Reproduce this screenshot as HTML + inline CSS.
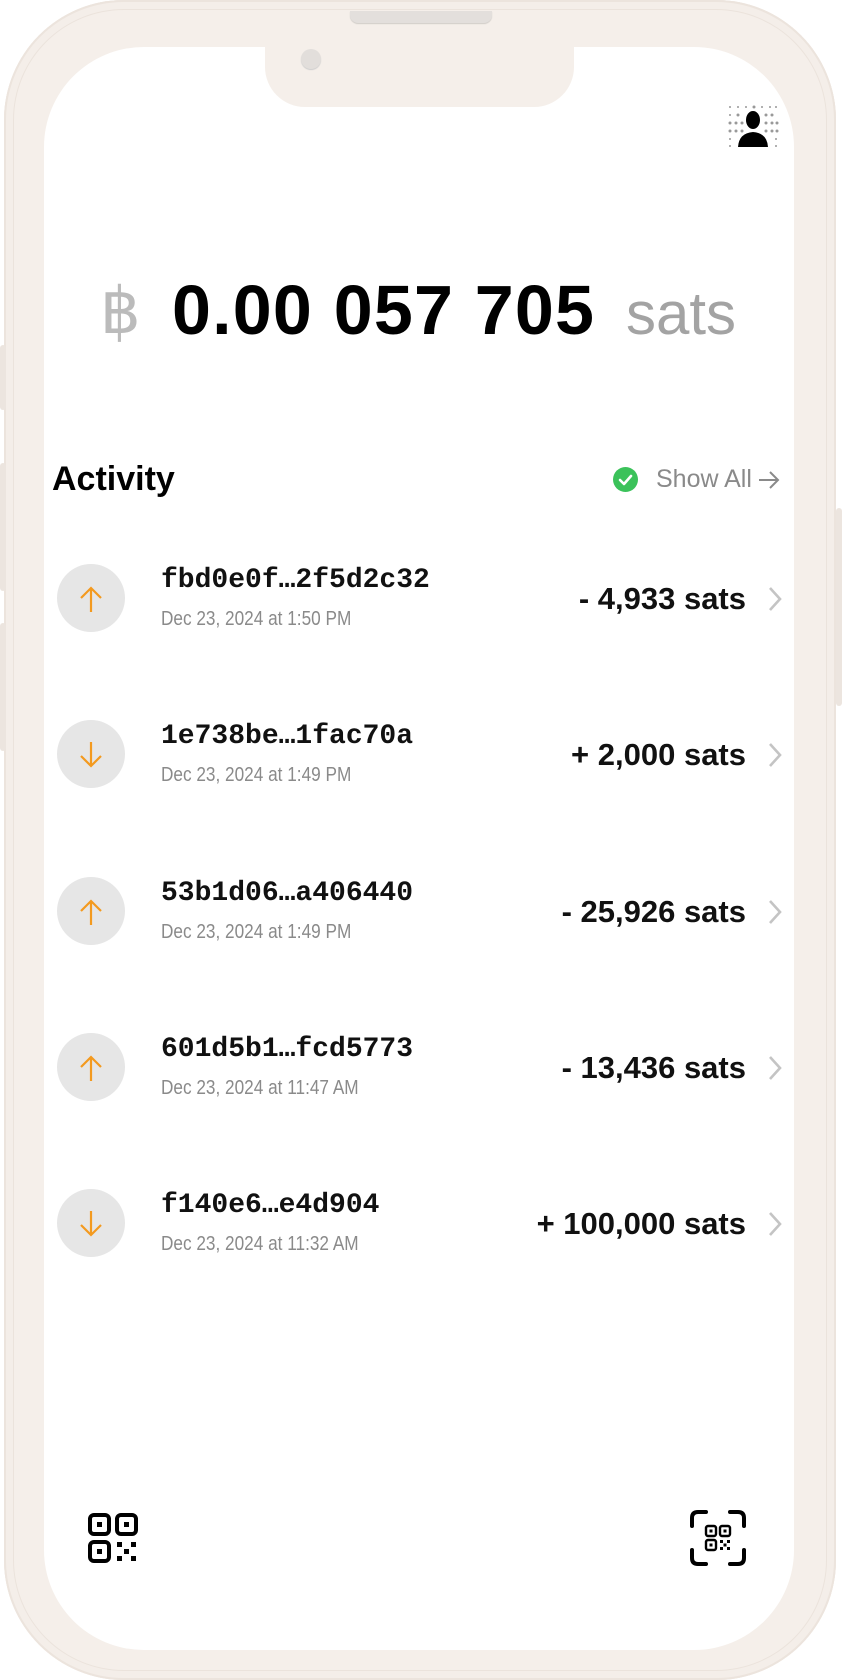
<!DOCTYPE html>
<html><head><meta charset="utf-8"><style>
*{margin:0;padding:0;box-sizing:border-box}
html,body{width:842px;height:1680px;background:#fff;overflow:hidden;font-family:"Liberation Sans",sans-serif}
.abs{position:absolute}
.phone{left:4px;top:0;width:832px;height:1680px;border-radius:120px;background:#f5efea;box-shadow:inset 0 0 0 2px #ece4dd, inset 0 0 0 9px #f4eee9, inset 0 0 0 10px #ebe3dc}
.screen{left:44px;top:47px;width:750px;height:1603px;border-radius:100px;background:#fff}
.notch{left:265px;top:40px;width:309px;height:67px;background:#f5efea;border-radius:0 0 40px 40px}
.spk{left:350px;top:11px;width:142px;height:12px;background:#e3dfdc;border-radius:0 0 8px 8px;box-shadow:0 1px 1px #d0ccc8}
.cam{left:301px;top:49px;width:20px;height:20px;border-radius:50%;background:#e2dedb;box-shadow:0 1px 1px #ccc}
.side{background:#ece5df;width:6px;border-radius:3px}
.mono{font-family:"Liberation Mono",monospace;font-weight:bold;font-size:28px;color:#111;line-height:34px}
.date{font-size:20px;color:#8a8a8a;transform:scaleX(0.86);transform-origin:0 0;white-space:nowrap}
.amt{font-weight:bold;font-size:31px;color:#111;right:96px;text-align:right;white-space:nowrap;line-height:34px}
.circ{left:57px;width:68px;height:68px;border-radius:50%;background:#e6e6e6}
</style></head><body>
<div class="abs phone"></div>
<div class="abs side" style="left:0;top:345px;height:65px"></div>
<div class="abs side" style="left:0;top:463px;height:128px"></div>
<div class="abs side" style="left:0;top:623px;height:128px"></div>
<div class="abs side" style="left:836px;top:508px;height:198px"></div>
<div class="abs screen"></div>
<div class="abs notch"></div>
<div class="abs spk"></div>
<div class="abs cam"></div>

<svg class="abs" style="left:727px;top:104px" width="52" height="44" viewBox="0 0 52 44">
<g fill="#999">
<circle cx="3" cy="3" r="1"/><circle cx="11" cy="3" r="1"/><circle cx="19" cy="3" r="1"/><circle cx="27" cy="3" r="1.5"/><circle cx="35" cy="3" r="1"/><circle cx="43" cy="3" r="1"/><circle cx="49" cy="3" r="1"/>
<circle cx="3" cy="11" r="1"/><circle cx="11" cy="11" r="1.5"/><circle cx="39" cy="11" r="1.5"/><circle cx="45" cy="11" r="1.5"/>
<circle cx="3" cy="19" r="1.5"/><circle cx="9" cy="19" r="1.5"/><circle cx="15" cy="19" r="1.5"/><circle cx="39" cy="19" r="1.5"/><circle cx="45" cy="19" r="1.5"/><circle cx="50" cy="19" r="1.5"/>
<circle cx="3" cy="27" r="1.5"/><circle cx="9" cy="27" r="1.5"/><circle cx="15" cy="27" r="1.5"/><circle cx="39" cy="27" r="1.5"/><circle cx="45" cy="27" r="1.5"/><circle cx="50" cy="27" r="1.5"/>
<circle cx="3" cy="35" r="1"/><circle cx="49" cy="35" r="1"/><circle cx="3" cy="42" r="1"/><circle cx="49" cy="42" r="1"/>
</g>
<ellipse cx="26" cy="16" rx="7" ry="9" fill="#000"/>
<path d="M11 43 Q12 29 26 28 Q40 29 41 43 Z" fill="#000"/>
</svg>

<div class="abs" style="left:100px;top:276px;font-size:64px;color:#bbb;font-weight:300;line-height:70px">฿</div>
<div class="abs" style="left:172px;top:270px;font-size:70px;font-weight:bold;color:#000;line-height:80px;letter-spacing:1.2px">0.00 057 705</div>
<div class="abs" style="left:626px;top:274px;font-size:60px;color:#9a9a9a;line-height:80px;opacity:0.9">sats</div>

<div class="abs" style="left:52px;top:459px;font-size:34px;font-weight:bold;color:#000;line-height:40px">Activity</div>
<svg class="abs" style="left:613px;top:467px" width="25" height="25" viewBox="0 0 25 25"><circle cx="12.5" cy="12.5" r="12.5" fill="#3bc25a"/><path d="M7 13 L11 17 L18 9" stroke="#fff" stroke-width="2.6" fill="none" stroke-linecap="round" stroke-linejoin="round"/></svg>
<div class="abs" style="left:656px;top:464px;font-size:25px;color:#8a8a8a;line-height:30px">Show All</div>
<svg class="abs" style="left:757px;top:469px" width="24" height="22" viewBox="0 0 24 22"><path d="M2 11 H21 M13 3 L21 11 L13 19" stroke="#8a8a8a" stroke-width="2" fill="none"/></svg>

<div class="abs circ" style="top:564px"></div>
<svg class="abs" style="left:78px;top:585px" width="26" height="28" viewBox="0 0 26 28"><path d="M13 27 V3 M3 13 L13 3 L23 13" stroke="#f39a1f" stroke-width="2.2" fill="none"/></svg>
<div class="abs mono" style="left:161px;top:564px">fbd0e0f…2f5d2c32</div>
<div class="abs date" style="left:161px;top:608px">Dec 23, 2024 at 1:50 PM</div>
<div class="abs amt" style="top:582px">- 4,933 sats</div>
<svg class="abs" style="left:767px;top:586px" width="16" height="26" viewBox="0 0 16 26"><path d="M3 2 L13 13 L3 24" stroke="#c4c4c4" stroke-width="2.6" fill="none"/></svg>

<div class="abs circ" style="top:720px"></div>
<svg class="abs" style="left:78px;top:741px" width="26" height="28" viewBox="0 0 26 28"><path d="M13 1 V25 M3 15 L13 25 L23 15" stroke="#f39a1f" stroke-width="2.2" fill="none"/></svg>
<div class="abs mono" style="left:161px;top:720px">1e738be…1fac70a</div>
<div class="abs date" style="left:161px;top:764px">Dec 23, 2024 at 1:49 PM</div>
<div class="abs amt" style="top:738px">+ 2,000 sats</div>
<svg class="abs" style="left:767px;top:742px" width="16" height="26" viewBox="0 0 16 26"><path d="M3 2 L13 13 L3 24" stroke="#c4c4c4" stroke-width="2.6" fill="none"/></svg>

<div class="abs circ" style="top:877px"></div>
<svg class="abs" style="left:78px;top:898px" width="26" height="28" viewBox="0 0 26 28"><path d="M13 27 V3 M3 13 L13 3 L23 13" stroke="#f39a1f" stroke-width="2.2" fill="none"/></svg>
<div class="abs mono" style="left:161px;top:877px">53b1d06…a406440</div>
<div class="abs date" style="left:161px;top:921px">Dec 23, 2024 at 1:49 PM</div>
<div class="abs amt" style="top:895px">- 25,926 sats</div>
<svg class="abs" style="left:767px;top:899px" width="16" height="26" viewBox="0 0 16 26"><path d="M3 2 L13 13 L3 24" stroke="#c4c4c4" stroke-width="2.6" fill="none"/></svg>

<div class="abs circ" style="top:1033px"></div>
<svg class="abs" style="left:78px;top:1054px" width="26" height="28" viewBox="0 0 26 28"><path d="M13 27 V3 M3 13 L13 3 L23 13" stroke="#f39a1f" stroke-width="2.2" fill="none"/></svg>
<div class="abs mono" style="left:161px;top:1033px">601d5b1…fcd5773</div>
<div class="abs date" style="left:161px;top:1077px">Dec 23, 2024 at 11:47 AM</div>
<div class="abs amt" style="top:1051px">- 13,436 sats</div>
<svg class="abs" style="left:767px;top:1055px" width="16" height="26" viewBox="0 0 16 26"><path d="M3 2 L13 13 L3 24" stroke="#c4c4c4" stroke-width="2.6" fill="none"/></svg>

<div class="abs circ" style="top:1189px"></div>
<svg class="abs" style="left:78px;top:1210px" width="26" height="28" viewBox="0 0 26 28"><path d="M13 1 V25 M3 15 L13 25 L23 15" stroke="#f39a1f" stroke-width="2.2" fill="none"/></svg>
<div class="abs mono" style="left:161px;top:1189px">f140e6…e4d904</div>
<div class="abs date" style="left:161px;top:1233px">Dec 23, 2024 at 11:32 AM</div>
<div class="abs amt" style="top:1207px">+ 100,000 sats</div>
<svg class="abs" style="left:767px;top:1211px" width="16" height="26" viewBox="0 0 16 26"><path d="M3 2 L13 13 L3 24" stroke="#c4c4c4" stroke-width="2.6" fill="none"/></svg>

<svg class="abs" style="left:88px;top:1513px" width="52" height="52" viewBox="0 0 52 52">
<g fill="none" stroke="#000" stroke-width="4"><rect x="2" y="2" width="19" height="19" rx="4"/><rect x="29" y="2" width="19" height="19" rx="4"/><rect x="2" y="29" width="19" height="19" rx="4"/></g>
<g fill="#000"><rect x="9" y="9" width="5" height="5"/><rect x="36" y="9" width="5" height="5"/><rect x="9" y="36" width="5" height="5"/><rect x="29" y="29" width="5" height="5"/><rect x="43" y="29" width="5" height="5"/><rect x="36" y="36" width="5" height="5"/><rect x="29" y="43" width="5" height="5"/><rect x="43" y="43" width="5" height="5"/></g>
</svg>
<svg class="abs" style="left:690px;top:1510px" width="56" height="56" viewBox="0 0 56 56">
<g fill="none" stroke="#000" stroke-width="4" stroke-linecap="round"><path d="M2 16 V8 Q2 2 8 2 H16"/><path d="M40 2 H48 Q54 2 54 8 V16"/><path d="M54 40 V48 Q54 54 48 54 H40"/><path d="M16 54 H8 Q2 54 2 48 V40"/></g>
<g fill="none" stroke="#000" stroke-width="2.4"><rect x="16" y="16" width="10" height="10" rx="2"/><rect x="30" y="16" width="10" height="10" rx="2"/><rect x="16" y="30" width="10" height="10" rx="2"/></g>
<g fill="#000"><rect x="19.5" y="19.5" width="3" height="3"/><rect x="33.5" y="19.5" width="3" height="3"/><rect x="19.5" y="33.5" width="3" height="3"/><rect x="30" y="30" width="3" height="3"/><rect x="37" y="30" width="3" height="3"/><rect x="33.5" y="33.5" width="3" height="3"/><rect x="30" y="37" width="3" height="3"/><rect x="37" y="37" width="3" height="3"/></g>
</svg>
</body></html>
